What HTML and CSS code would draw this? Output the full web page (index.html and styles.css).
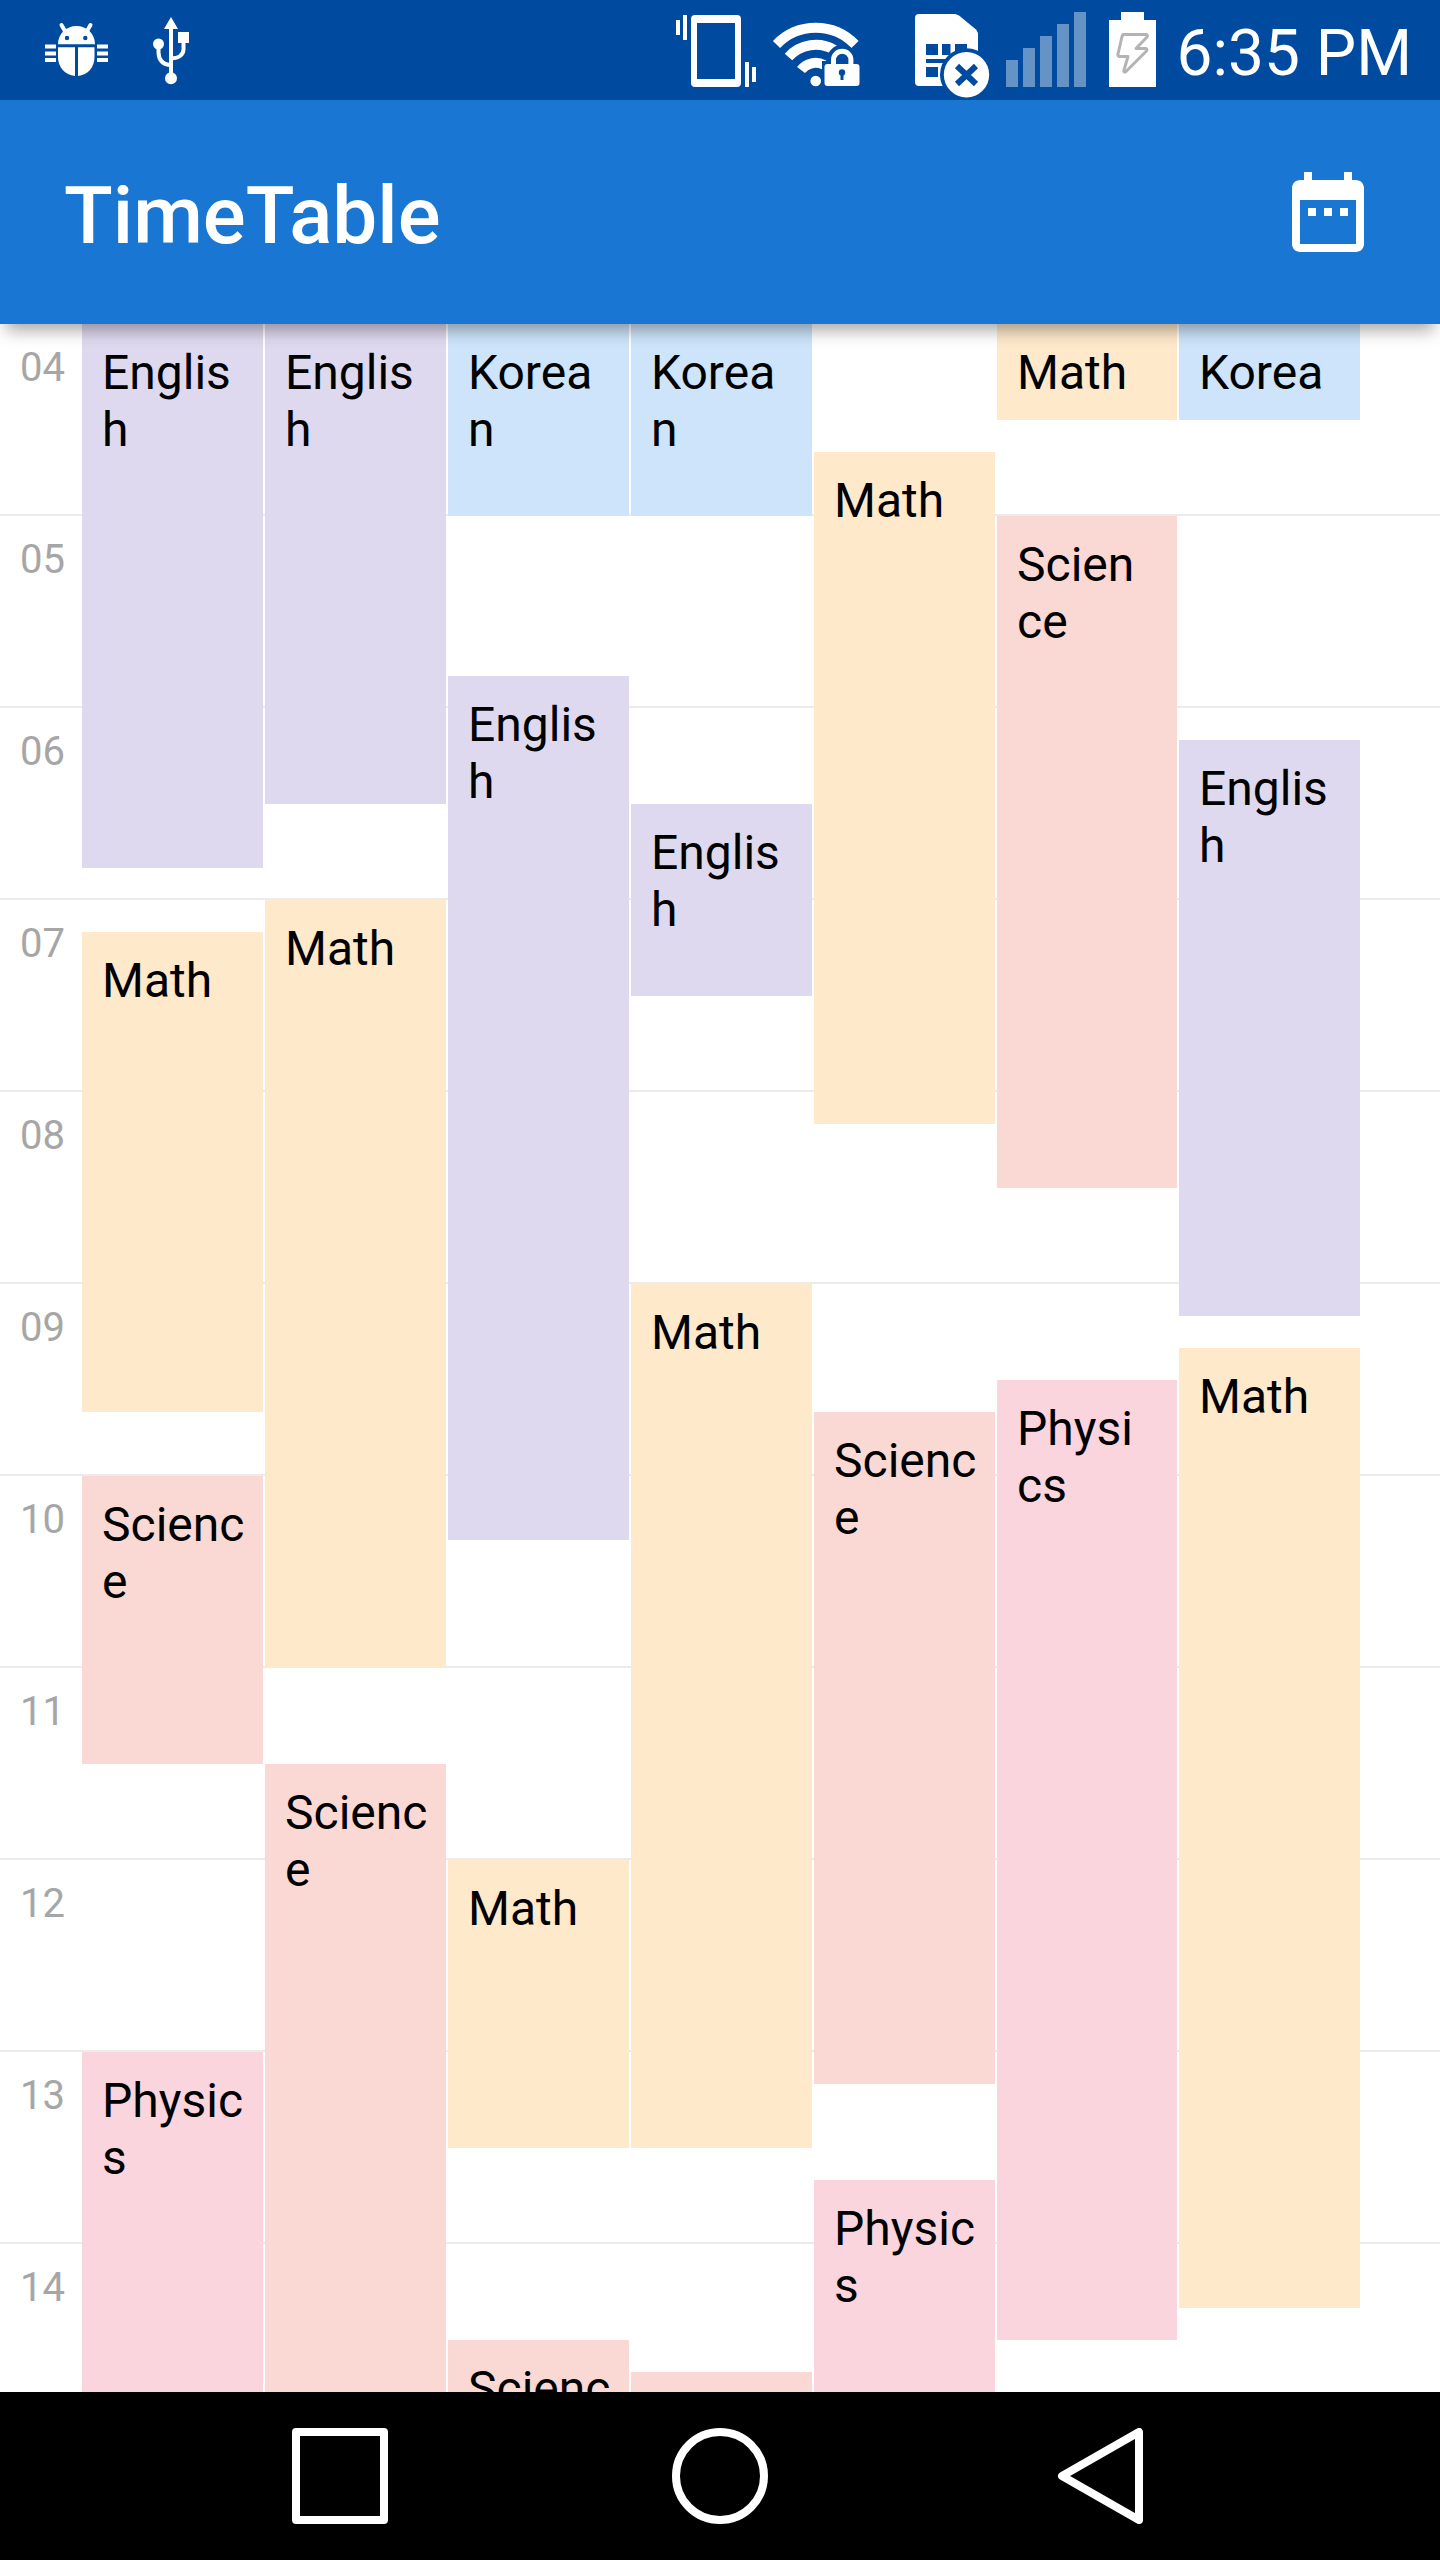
FILE: index.html
```html
<!DOCTYPE html>
<html lang="en">
<head>
<meta charset="utf-8">
<meta name="viewport" content="width=device-width, initial-scale=1">
<title>TimeTable</title>
<link rel="stylesheet" href="styles.css">
</head>
<body>
<div class="status-bar">
  <div class="status-group notifications">
    <svg width="72" height="100" viewBox="40 0 72 100" fill="currentColor" aria-hidden="true">
      <path d="M45 44.5h11v4H45zM45 51.5h11v4H45zM45 58h11v4H45zM97 44.5h11v4H97zM97 51.5h11v4H97zM97 58h11v4H97z"/>
      <path d="M58 44.3C58 34 66 26 76.500 26S95 34 95 44.300Z"/>
      <path d="M61.500 25l4 7M90.500 25l-4 7" stroke="currentColor" stroke-width="4" stroke-linecap="round"/>
      <path d="M58 47.300H75V76C65 75 58 67 58 57ZM78 47.300H94.500V57C94.500 67 88 75 78 76Z"/>
      <circle class="cutout" cx="67" cy="38" r="2.200"/>
      <circle class="cutout" cx="85.300" cy="38" r="2.200"/>
    </svg>
    <svg width="40" height="100" viewBox="152 0 40 100" fill="currentColor" aria-hidden="true">
      <path d="M171 17l7 12h-5v46h-4V29h-5zM178 32h11v11h-11z"/>
      <circle cx="171" cy="78.300" r="6"/>
      <circle cx="158.500" cy="44" r="5.500"/>
      <path d="M158.500 48v4.500Q159 64.500 171 65.300M183.500 42v7.500Q183 58 171 58.500" fill="none" stroke="currentColor" stroke-width="4"/>
    </svg>
  </div>
  <div class="status-group system">
    <svg width="80" height="100" viewBox="676 0 80 100" fill="currentColor" aria-hidden="true">
      <path fill-rule="evenodd" d="M695 15h42a4 4 0 0 1 4 4v64a4 4 0 0 1-4 4h-42a4 4 0 0 1-4-4V19a4 4 0 0 1 4-4zM697 23v56h38V23z"/>
      <path d="M676 20h4v15h-4zM683 15h4v25h-4zM745 62h4v25h-4zM752 67h4v15h-4z"/>
    </svg>
    <svg width="88" height="100" viewBox="772 0 88 100" fill="none" stroke="currentColor" aria-hidden="true">
      <g stroke-width="10">
        <path d="M776.500 44.500A54.500 54.500 0 0 1 855 44.500"/>
        <path d="M788.500 57A36.500 36.500 0 0 1 834.500 50"/>
        <path d="M801 70A18.500 18.500 0 0 1 824 64.900"/>
      </g>
      <circle cx="815.700" cy="81" r="5.300" fill="currentColor" stroke="none"/>
      <path class="halo" stroke-width="13" d="M833.500 66V60a8.700 8.700 0 0 1 17.400 0V66"/>
      <path class="halo" stroke-width="6" d="M825 64h34v22h-34z"/>
      <path stroke-width="5" d="M833.500 66V60a8.700 8.700 0 0 1 17.400 0V66"/>
      <rect x="824.500" y="64" width="35" height="22" rx="3" fill="currentColor" stroke="none"/>
      <circle class="cutout" cx="842" cy="72.500" r="3.200" stroke="none"/>
      <path class="halo" stroke-width="3" d="M842 73v7"/>
    </svg>
    <svg width="114" height="100" viewBox="876 0 114 100" fill="currentColor" aria-hidden="true">
      <path d="M919 14h36.500l3.500 1.500 17 14 2 3.500V86h-59a4 4 0 0 1-4-4V18a4 4 0 0 1 4-4z"/>
      <path class="cutout" d="M926 44h12v11h-12zM942 44h8.500v11H942zM955 44h12v11h-12zM926 59h22v4h-22zM926 67h12v10h-12z"/>
      <circle class="cutout" cx="966.500" cy="74.700" r="26.500"/>
      <circle cx="966.500" cy="74.700" r="22.700"/>
      <path class="halo" stroke-width="6" d="M957 66l19 18M976 66l-19 18"/>
    </svg>
    <svg width="80" height="100" viewBox="1006 0 80 100" fill="currentColor" opacity=".4" aria-hidden="true">
      <path d="M1006 60h12v27h-12zM1023 48h12v39h-12zM1040 36h12v51h-12zM1057 24h12v63h-12zM1074 12h12v75h-12z"/>
    </svg>
    <svg width="58" height="100" viewBox="1102 0 58 100" fill="currentColor" aria-hidden="true">
      <path d="M1121 12h23v8h12v67h-47V20h12z"/>
      <path class="bolt" d="M1123 34.500h23.500q1.500 1 .5 2.500L1136 48.500h10q1.500 1 .5 2.500L1125.500 72q-2 .5-1.500-2l4-13.500h-9q-1.500-1-1-2.500l4-17.500z"/>
    </svg>
    <time class="clock" datetime="18:35">6:35 PM</time>
  </div>
</div>

<header class="app-bar">
  <h1 class="app-title">TimeTable</h1>
  <button class="icon-button" type="button" aria-label="Choose date">
    <svg width="96" height="96" viewBox="0 0 24 24" fill="currentColor" aria-hidden="true">
      <path d="M9 11H7v2h2zm4 0h-2v2h2zm4 0h-2v2h2zm2-7h-1V2h-2v2H8V2H6v2H5c-1.110 0-1.990.9-1.990 2L3 20c0 1.100.890 2 2 2h14c1.100 0 2-.9 2-2V6c0-1.100-.9-2-2-2zm0 16H5V9h14z"/>
    </svg>
  </button>
</header>

<main class="timetable">
  <ol class="hours">
    <li class="hour">04</li>
    <li class="hour">05</li>
    <li class="hour">06</li>
    <li class="hour">07</li>
    <li class="hour">08</li>
    <li class="hour">09</li>
    <li class="hour">10</li>
    <li class="hour">11</li>
    <li class="hour">12</li>
    <li class="hour">13</li>
    <li class="hour">14</li>
  </ol>
  <!-- Each grid row is ten minutes, counted from 04:00. -->
  <div class="week">
    <ul class="day">
      <li class="lesson english" style="grid-row: 1 / 18">English</li>
      <li class="lesson math" style="grid-row: 20 / 35">Math</li>
      <li class="lesson science" style="grid-row: 37 / 46">Science</li>
      <li class="lesson physics" style="grid-row: 55 / 67">Physics</li>
    </ul>
    <ul class="day">
      <li class="lesson english" style="grid-row: 1 / 16">English</li>
      <li class="lesson math" style="grid-row: 19 / 43">Math</li>
      <li class="lesson science" style="grid-row: 46 / 67">Science</li>
    </ul>
    <ul class="day">
      <li class="lesson korean" style="grid-row: 1 / 7">Korean</li>
      <li class="lesson english" style="grid-row: 12 / 39">English</li>
      <li class="lesson math" style="grid-row: 49 / 58">Math</li>
      <li class="lesson science" style="grid-row: 64 / 67">Science</li>
    </ul>
    <ul class="day">
      <li class="lesson korean" style="grid-row: 1 / 7">Korean</li>
      <li class="lesson english" style="grid-row: 16 / 22">English</li>
      <li class="lesson math" style="grid-row: 31 / 58">Math</li>
      <li class="lesson science" style="grid-row: 65 / 67"></li>
    </ul>
    <ul class="day">
      <li class="lesson math" style="grid-row: 5 / 26">Math</li>
      <li class="lesson science" style="grid-row: 35 / 56">Science</li>
      <li class="lesson physics" style="grid-row: 59 / 67">Physics</li>
    </ul>
    <ul class="day narrow">
      <li class="lesson math" style="grid-row: 1 / 4">Math</li>
      <li class="lesson science" style="grid-row: 7 / 28">Science</li>
      <li class="lesson physics" style="grid-row: 34 / 64">Physics</li>
    </ul>
    <ul class="day">
      <li class="lesson korean" style="grid-row: 1 / 4">Korean</li>
      <li class="lesson english" style="grid-row: 14 / 32">English</li>
      <li class="lesson math" style="grid-row: 33 / 63">Math</li>
    </ul>
  </div>
</main>

<nav class="nav-bar" aria-label="System">
  <button class="nav-button" type="button" aria-label="Recent apps">
    <svg width="96" height="96" viewBox="0 0 96 96" aria-hidden="true"><path d="M4 4h88v88H4z"/></svg>
  </button>
  <button class="nav-button" type="button" aria-label="Home">
    <svg width="96" height="96" viewBox="0 0 96 96" aria-hidden="true"><circle cx="48" cy="48" r="44"/></svg>
  </button>
  <button class="nav-button" type="button" aria-label="Back">
    <svg width="96" height="96" viewBox="0 0 96 96" aria-hidden="true"><path d="M10 48L87 4v88z"/></svg>
  </button>
</nav>
</body>
</html>
```

FILE: styles.css
```css
:root {
  --status: #004ba0;
  --primary: #1976d2;
  --slot: 32px;
}

* {
  box-sizing: border-box;
}

body {
  margin: 0;
  height: 100vh;
  display: flex;
  flex-direction: column;
  overflow: hidden;
  background: #fff;
  color: #000;
  font-family: Roboto, "Noto Sans", sans-serif;
}

button {
  padding: 0;
  border: 0;
  background: none;
  color: inherit;
  font: inherit;
}

svg {
  display: block;
  flex: none;
}

ol,
ul {
  margin: 0;
  padding: 0;
  list-style: none;
}

/* Status bar */
.status-bar {
  display: flex;
  justify-content: space-between;
  flex: none;
  height: 100px;
  padding: 0 28px 0 40px;
  background: var(--status);
  color: #fff;
}

.status-group {
  display: flex;
  align-items: center;
}

.notifications {
  gap: 40px;
}

.system {
  gap: 16px;
}

.cutout {
  fill: var(--status);
}

.halo {
  fill: none;
  stroke: var(--status);
}

.bolt {
  fill: none;
  stroke: #b4b4b4;
  stroke-width: 3;
  stroke-linejoin: round;
}

.clock {
  padding-top: 8px;
  font-size: 64px;
  line-height: 76px;
  white-space: nowrap;
}

/* App bar */
.app-bar {
  position: relative;
  z-index: 1;
  display: flex;
  align-items: center;
  justify-content: space-between;
  flex: none;
  height: 224px;
  padding: 0 64px;
  background: var(--primary);
  color: #fff;
  box-shadow: 0 12px 16px -6px rgba(0, 0, 0, .36);
}

.app-title {
  margin: 0;
  padding-top: 8px;
  font-size: 80px;
  font-weight: 500;
  line-height: 94px;
}

/* Timetable */
.timetable {
  display: grid;
  flex: 1;
  min-height: 0;
  align-content: start;
  overflow-y: auto;
  scrollbar-width: none;
}

.hours,
.week {
  grid-area: 1 / 1;
}

.hour {
  height: calc(var(--slot) * 6);
  padding: 20px;
  border-bottom: 2px solid #ebebeb;
  color: #a6a6a6;
  font-size: 40px;
  line-height: 47px;
}

.week {
  display: grid;
  grid-template-columns: 181fr 181fr 181fr 181fr 181fr 180fr 181fr;
  column-gap: 2px;
  padding: 0 80px 0 82px;
}

.day {
  display: grid;
  grid-template-rows: repeat(66, var(--slot));
  min-width: 0;
}

.lesson {
  min-width: 0;
  min-height: 0;
  padding: 20px 18px 0 20px;
  overflow: hidden;
  font-size: 48px;
  line-height: 57px;
  overflow-wrap: anywhere;
}

.narrow .lesson {
  padding-right: 20px;
}

.english { background: #ded9ef; }
.math { background: #fee9cb; }
.korean { background: #cde4fa; }
.science { background: #fad8d3; }
.physics { background: #fad5dd; }

/* Navigation bar */
.nav-bar {
  display: flex;
  flex: none;
  height: 168px;
  padding: 0 150px;
  background: #000;
  color: #fff;
}

.nav-button {
  display: flex;
  flex: 1;
  align-items: center;
  justify-content: center;
}

.nav-button svg {
  fill: none;
  stroke: currentColor;
  stroke-width: 8;
  stroke-linejoin: round;
}
```
